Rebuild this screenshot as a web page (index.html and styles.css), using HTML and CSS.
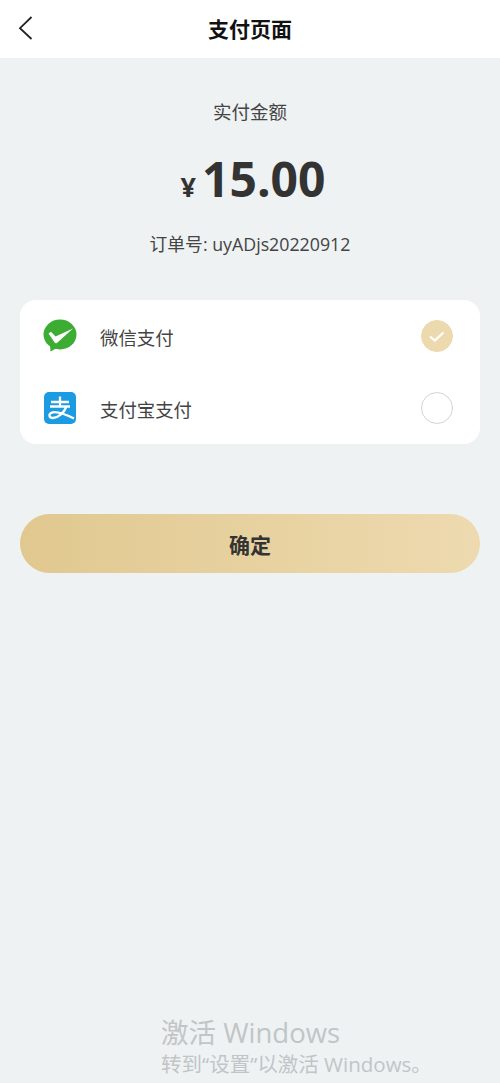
FILE: index.html
```html
<!DOCTYPE html>
<html lang="zh-CN">
<head>
<meta charset="utf-8">
<title>支付页面</title>
<link rel="stylesheet" href="styles.css">
</head>
<body>
<div class="page">
  <header class="topbar">
    <svg class="back" viewBox="0 0 16 24" width="16" height="24"><path d="M14.500 1 L3 12.200 L14.500 23" fill="none" stroke="#222" stroke-width="1.800"/></svg>
    <h1 class="title">支付页面</h1>
  </header>
  <section class="summary">
    <div class="label">实付金额</div>
    <div class="amount"><span class="yen">¥</span><span class="num">15.00</span></div>
    <div class="order">订单号: uyADjs20220912</div>
  </section>
  <section class="card">
    <div class="row">
      <svg class="icon" viewBox="0 0 34 34" width="34" height="34">
        <ellipse cx="17" cy="15.500" rx="16.500" ry="15" fill="#3dac33"/>
        <path d="M7 25L7.500 32.500L14 29Z" fill="#3dac33"/>
        <path d="M5.500 14.500L8 12.800L12.500 17.500L30 9.500L14.500 23.500A1.800 1.800 0 0 1 11.500 23.300Z" fill="#fff"/>
      </svg>
      <span class="name">微信支付</span>
      <span class="radio checked"><svg viewBox="0 0 20 16" width="20" height="16"><path d="M3 8.500L7.800 12.500L16.500 4.500" fill="none" stroke="#fff" stroke-width="2.200"/></svg></span>
    </div>
    <div class="row">
      <svg class="icon" viewBox="0 0 34 34" width="34" height="34">
        <rect x="1" y="1" width="32" height="32" rx="5" fill="#1a9be2"/>
        <path d="M8 11H26M17 5.500V15.500M7 15.500H27M23.500 15.500C21 22 15 27 10 27C6 27 5.500 23.500 8 22C12 19.500 21 22.500 31 27.500" fill="none" stroke="#fff" stroke-width="2.300"/>
      </svg>
      <span class="name">支付宝支付</span>
      <span class="radio"></span>
    </div>
  </section>
  <button class="confirm" type="button">确定</button>
  <div class="watermark">
    <div class="wm-main">激活 Windows</div>
    <div class="wm-sub">转到“设置”以激活 Windows。</div>
  </div>
</div>
</body>
</html>
```

FILE: styles.css
```css
* { box-sizing: border-box; margin: 0; padding: 0; }
html, body { height: 100%; }
body {
  background: #eef2f3;
  font-family: "Open Sans", "Noto Sans CJK SC", sans-serif;
  color: #333;
  overflow: hidden;
}
.page { position: relative; height: 1083px; }
.topbar {
  height: 58px;
  background: #fff;
  display: flex;
  align-items: center;
  justify-content: center;
  position: relative;
}
.back { position: absolute; left: 17px; top: 16px; }
.title { font-size: 21px; font-weight: 700; color: #111; line-height: 60px; }
.summary { display: flex; flex-direction: column; align-items: center; }
.label { margin-top: 41px; font-size: 18.500px; line-height: 26px; color: #444; }
.amount { margin-top: 22px; margin-left: 6px; height: 64px; display: flex; align-items: baseline; justify-content: center; color: #333; font-weight: 700; line-height: 64px; }
.yen { font-size: 27px; margin-right: 6px; }
.num { font-size: 48px; }
.order { margin-top: 20px; font-size: 17.800px; line-height: 26px; color: #444; }
.card {
  margin: 43px 20px 0;
  height: 144px;
  background: #fff;
  border-radius: 16px;
}
.row { height: 72px; display: flex; align-items: center; padding: 0 27px 0 23px; }
.icon { flex: none; margin-top: -1px; }
.name { margin-left: 23px; margin-top: 1px; font-size: 18.400px; color: #444; flex: 1; }
.radio {
  width: 32px; height: 32px; border-radius: 50%;
  border: 1.500px solid #d4d4d4;
  display: flex; align-items: center; justify-content: center;
}
.radio.checked { background: #edd9ae; border-color: #edd9ae; }
.confirm {
  display: block;
  width: 460px;
  height: 59px;
  margin: 70px 20px 0;
  border: none;
  border-radius: 30px;
  background: linear-gradient(90deg, #e0c88f, #eedab0);
  font-family: inherit;
  font-size: 21px;
  font-weight: 700;
  color: #333;
}
.watermark { position: absolute; left: 161px; top: 1015px; color: #c1c5c7; white-space: nowrap; }
.wm-main { font-size: 27.500px; line-height: 36px; }
.wm-sub { font-size: 20.500px; line-height: 26px; }
```
